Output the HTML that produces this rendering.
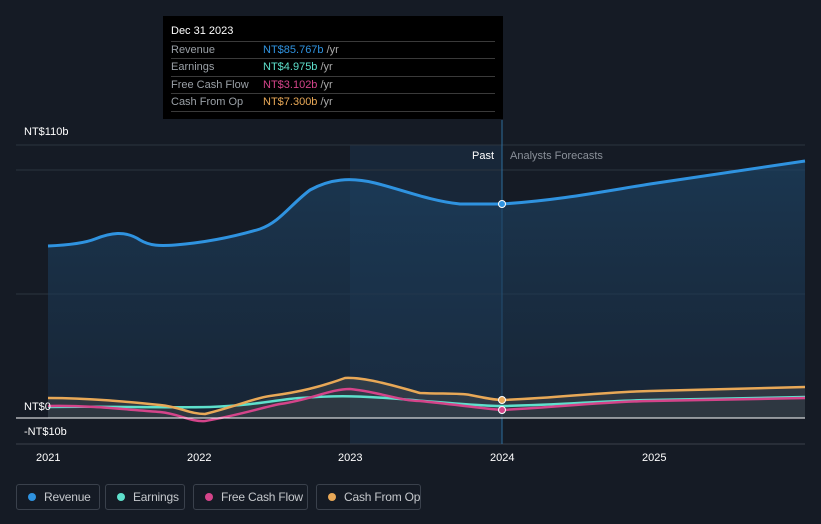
<!DOCTYPE html>
<html><head><meta charset="utf-8"><style>
body{margin:0;width:821px;height:524px;background:#151b25;font-family:"Liberation Sans",sans-serif;overflow:hidden;position:relative}
.tt{position:absolute;left:163px;top:16px;width:340px;height:103px;background:#000;color:#fff;font-size:11px}
.tt .h{position:absolute;left:8px;top:9px}
.row{position:absolute;left:8px;width:324px;height:17px;border-top:1px solid #3a3a3a;line-height:17px;color:#9aa0a6}
.row span{position:absolute;left:92px}
.row i{font-style:normal;color:#aaa}
.lg{position:absolute;top:484px;height:26px;box-sizing:border-box;border:1px solid #3a414c;border-radius:3px;color:#c5c8cc;font-size:12px;line-height:24px;padding-left:27px;white-space:nowrap;overflow:hidden;letter-spacing:-0.2px}
.lg b{position:absolute;left:11px;top:8px;width:8px;height:8px;border-radius:50%}
.ax{position:absolute;color:#fff;font-size:11px}
</style></head><body>
<svg width="821" height="524" style="position:absolute;left:0;top:0">
<defs><linearGradient id="g" x1="0" y1="0" x2="0" y2="1"><stop offset="0" stop-color="#1d4466" stop-opacity=".9"/><stop offset="1" stop-color="#1a2e44" stop-opacity=".7"/></linearGradient></defs>
<rect x="350" y="145" width="152" height="299" fill="#1a3048" opacity=".6"/>
<line x1="16" y1="145" x2="805" y2="145" stroke="#2c3440"/>
<line x1="16" y1="170" x2="805" y2="170" stroke="#2c3440"/>
<line x1="16" y1="294" x2="805" y2="294" stroke="#2c3440"/>
<line x1="16" y1="444" x2="805" y2="444" stroke="#3a414c"/>
<line x1="502" y1="120" x2="502" y2="444" stroke="#2d6c9c"/>
<path d="M48,246 C70,245 85,243 95,239 C110,233 125,230 140,240 C150,246 160,246 175,245 C200,243 230,238 260,229 C280,222 290,205 310,190 C330,179 350,177 375,183 C400,189 430,201 460,204 L502,204 C560,200 600,192 650,184 C720,174 770,166 805,161 L805,418 L48,418 Z" fill="url(#g)" opacity=".75"/>
<path d="M48,398 C120,398 160,403 200,414 C240,405 280,395 310,391 C330,380 350,375 380,382 C410,392 420,393 465,394 C480,395 490,400 502,400 C560,398 600,392 650,391 L805,387 L805,418 L48,418 Z" fill="#5a5a55" opacity=".35"/>
<path d="M48,246 C70,245 85,243 95,239 C110,233 125,230 140,240 C150,246 160,246 175,245 C200,243 230,238 260,229 C280,222 290,205 310,190 C330,179 350,177 375,183 C400,189 430,201 460,204 L502,204 C560,200 600,192 650,184 C720,174 770,166 805,161" fill="none" stroke="#2f93e0" stroke-width="3"/>
<path d="M48,407 C100,406 160,408 210,407 C260,405 280,399 300,398 C330,396 350,395 400,399 C450,403 480,406 502,406 C560,405 600,401 650,400 L805,397" fill="none" stroke="#5ee0cc" stroke-width="2.5"/>
<path d="M48,406 C90,405 130,410 160,412 C180,414 190,422 205,421 C240,415 260,408 280,404 C310,400 330,389 350,389 C380,392 400,401 420,401 C450,404 480,408 502,410 C560,407 600,402 650,401 L805,398" fill="none" stroke="#d4448a" stroke-width="2.5"/>
<path d="M48,398 C90,398 130,402 160,405 C180,407 190,414 205,414 C240,405 255,398 270,396 C300,392 320,387 345,378 C365,377 395,386 420,393 C440,394 460,393 470,395 C485,398 495,400 502,400 C560,398 600,392 650,391 L805,387" fill="none" stroke="#e8a857" stroke-width="2.5"/>
<line x1="16" y1="418" x2="805" y2="418" stroke="#fff" stroke-width="1"/>
<circle cx="502" cy="204" r="3.5" fill="#2f93e0" stroke="#fff"/>
<circle cx="502" cy="400" r="3.5" fill="#e8a857" stroke="#fff"/>
<circle cx="502" cy="410" r="3.5" fill="#d4448a" stroke="#fff"/>
</svg>
<div class="tt"><div class="h">Dec 31 2023</div>
<div class="row" style="top:25px">Revenue<span><b style="font-weight:normal;color:#2f93e0">NT$85.767b</b> <i>/yr</i></span></div>
<div class="row" style="top:42px">Earnings<span><b style="font-weight:normal;color:#5ee0cc">NT$4.975b</b> <i>/yr</i></span></div>
<div class="row" style="top:60px">Free Cash Flow<span><b style="font-weight:normal;color:#d4448a">NT$3.102b</b> <i>/yr</i></span></div>
<div class="row" style="top:77px;border-bottom:1px solid #3a3a3a">Cash From Op<span><b style="font-weight:normal;color:#e8a857">NT$7.300b</b> <i>/yr</i></span></div>
</div>
<div class="ax" style="left:24px;top:126px">NT$110b</div>
<div class="ax" style="left:24px;top:401px">NT$0</div>
<div class="ax" style="left:24px;top:426px">-NT$10b</div>
<div class="ax" style="left:472px;top:150px">Past</div>
<div class="ax" style="left:510px;top:150px;color:#8a9099">Analysts Forecasts</div>
<div class="ax" style="left:36px;top:452px">2021</div>
<div class="ax" style="left:187px;top:452px">2022</div>
<div class="ax" style="left:338px;top:452px">2023</div>
<div class="ax" style="left:490px;top:452px">2024</div>
<div class="ax" style="left:642px;top:452px">2025</div>
<div class="lg" style="left:16px;width:84px"><b style="background:#2f93e0"></b>Revenue</div>
<div class="lg" style="left:105px;width:80px"><b style="background:#5ee0cc"></b>Earnings</div>
<div class="lg" style="left:193px;width:115px"><b style="background:#d4448a"></b>Free Cash Flow</div>
<div class="lg" style="left:316px;width:105px"><b style="background:#e8a857"></b>Cash From Op</div>
</body></html>
